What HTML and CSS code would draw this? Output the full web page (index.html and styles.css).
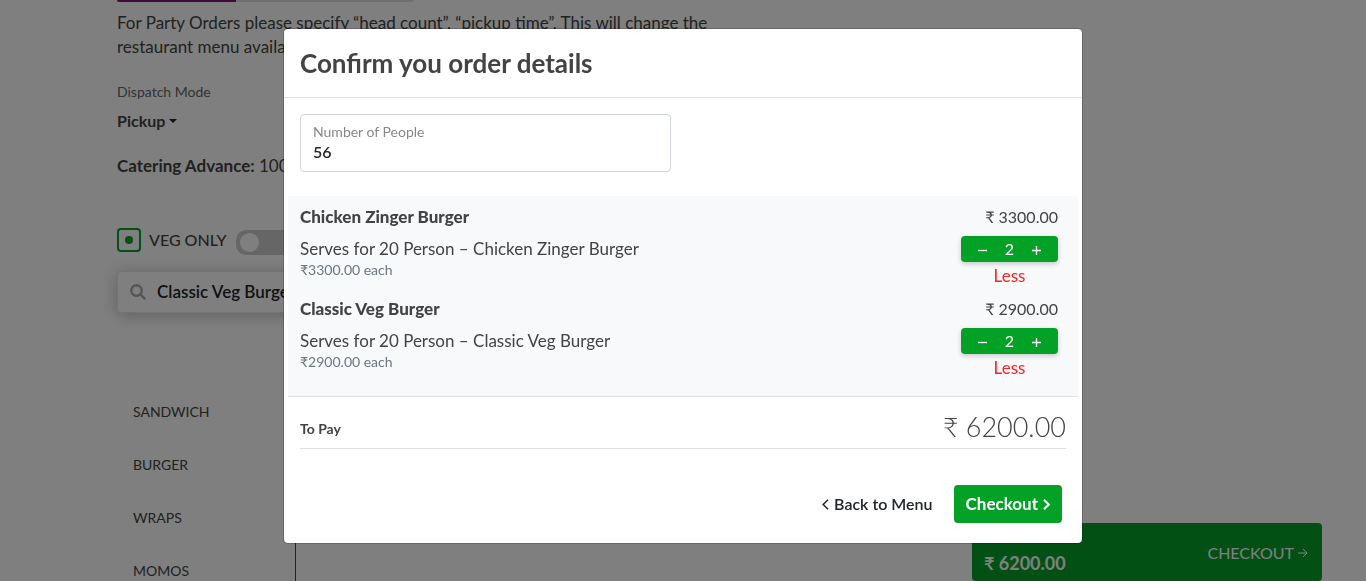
FILE: index.html
```html
<!DOCTYPE html>
<html lang="en">
<head>
<meta charset="utf-8">
<meta name="viewport" content="width=device-width, initial-scale=1">
<title>Confirm you order details</title>
<link rel="stylesheet" href="styles.css">
</head>
<body>
<main class="page">
  <div class="progress"><div class="progress-fill" style="width:40%"></div></div>
  <p class="notice">For Party Orders please specify “head count”, “pickup time”. This will change the restaurant menu available.</p>
  <label class="dispatch-label" for="dispatch">Dispatch Mode</label>
  <div class="dispatch">
    <select id="dispatch" class="dispatch-select"><option>Pickup</option></select>
    <svg class="caret" viewBox="0 0 8 4" aria-hidden="true"><path d="M0 0h8L4 4z"/></svg>
  </div>
  <p class="advance"><strong>Catering Advance:</strong> 100%</p>
  <div class="veg">
    <span class="veg-mark"></span>
    <label for="veg">VEG ONLY</label>
    <input class="toggle" type="checkbox" id="veg">
  </div>
  <div class="search">
    <svg class="search-icon" viewBox="0 0 16 16" aria-hidden="true"><circle cx="6.5" cy="6.5" r="5.2"/><path d="M10.5 10.5L14.6 14.6"/></svg>
    <input class="search-input" type="text" value="Classic Veg Burger" aria-label="Search menu">
  </div>
  <nav class="categories">
    <a href="#sandwich">SANDWICH</a>
    <a href="#burger">BURGER</a>
    <a href="#wraps">WRAPS</a>
    <a href="#momos">MOMOS</a>
  </nav>
</main>
<aside class="cart-bar">
  <strong class="cart-total">₹ 6200.00</strong>
  <button class="cart-checkout" type="button">CHECKOUT
    <svg class="arrow" viewBox="0 0 10 10" aria-hidden="true"><path d="M0 5h9M5 1l4 4-4 4"/></svg>
  </button>
</aside>
<div class="backdrop">
  <section class="modal" role="dialog" aria-modal="true" aria-labelledby="modal-title">
    <header class="modal-header"><h1 id="modal-title">Confirm you order details</h1></header>
    <div class="fields">
      <div class="field">
        <label for="people">Number of People</label>
        <input id="people" type="text" value="56">
      </div>
    </div>
    <div class="items">
      <article class="item">
        <div class="item-info">
          <h2>Chicken Zinger Burger</h2>
          <p class="serves">Serves for 20 Person – Chicken Zinger Burger</p>
          <p class="each">₹3300.00 each</p>
        </div>
        <div class="item-side">
          <span class="price">₹ 3300.00</span>
          <div class="stepper">
            <button type="button" aria-label="Decrease"><svg viewBox="0 0 9 9"><path d="M0 4.5h9"/></svg></button>
            <span>2</span>
            <button type="button" aria-label="Increase"><svg viewBox="0 0 9 9"><path d="M0 4.5h9M4.5 0v9"/></svg></button>
          </div>
          <span class="less">Less</span>
        </div>
      </article>
      <article class="item">
        <div class="item-info">
          <h2>Classic Veg Burger</h2>
          <p class="serves">Serves for 20 Person – Classic Veg Burger</p>
          <p class="each">₹2900.00 each</p>
        </div>
        <div class="item-side">
          <span class="price">₹ 2900.00</span>
          <div class="stepper">
            <button type="button" aria-label="Decrease"><svg viewBox="0 0 9 9"><path d="M0 4.5h9"/></svg></button>
            <span>2</span>
            <button type="button" aria-label="Increase"><svg viewBox="0 0 9 9"><path d="M0 4.5h9M4.5 0v9"/></svg></button>
          </div>
          <span class="less">Less</span>
        </div>
      </article>
    </div>
    <div class="total">
      <span class="total-label">To Pay</span>
      <span class="total-value">₹ 6200.00</span>
    </div>
    <footer class="actions">
      <button class="back" type="button"><svg class="chevron" viewBox="0 0 7 11" aria-hidden="true"><path d="M6 0.8L1.2 5.5L6 10.2"/></svg>Back to Menu</button>
      <button class="checkout" type="button">Checkout<svg class="chevron bold" viewBox="0 0 7 11" aria-hidden="true"><path d="M1 0.8L5.8 5.5L1 10.2"/></svg></button>
    </footer>
  </section>
</div>
</body>
</html>
```
FILE: styles.css
```css
* { box-sizing: border-box; }
body {
  margin: 0;
  height: 100vh;
  overflow: hidden;
  background: #fff;
  color: #434343;
  font: 17px/24px Lato, "Noto Sans", sans-serif;
}
h1, h2, p { margin: 0; }
button, input, select { font: inherit; color: inherit; }
button { border: 0; background: none; padding: 0; cursor: pointer; }
svg { fill: none; stroke: currentColor; }

.page { padding: 0 117px; }
.progress {
  width: 297px;
  height: 2px;
  background: #e0e0e0;
  border-radius: 0 0 4px 4px;
  overflow: hidden;
}
.progress-fill { height: 100%; background: #7b1b6b; }
.notice { max-width: 620px; margin-top: 9px; }
.dispatch-label { display: block; margin-top: 21px; font-size: 14px; color: #666; }
.dispatch { display: flex; align-items: center; gap: 3px; margin-top: 5px; }
.dispatch-select {
  appearance: none;
  border: 0;
  padding: 0;
  background: none;
  font-size: 16px;
  font-weight: 700;
}
.caret { width: 8px; height: 4px; fill: #212529; stroke: none; }
.advance { margin-top: 21px; }
.veg { display: flex; align-items: center; gap: 8px; margin-top: 49px; height: 26px; font-size: 16px; font-weight: 500; }
.veg-mark {
  display: grid;
  place-items: center;
  width: 24px;
  height: 24px;
  border: 2px solid #04a127;
  border-radius: 4px;
}
.veg-mark::before { content: ""; width: 8px; height: 8px; border-radius: 50%; background: #04a127; }
.toggle {
  appearance: none;
  width: 60px;
  height: 25px;
  margin: 4px 0 0 1px;
  padding: 3px 4px;
  border-radius: 10px;
  background: #ccc;
}
.toggle::before { content: ""; display: block; width: 19px; height: 19px; border-radius: 50%; background: #fff; }
.search {
  display: flex;
  align-items: center;
  gap: 11px;
  width: 400px;
  height: 42px;
  margin-top: 18px;
  padding: 0 12px;
  border: 1px solid #e6e6e6;
  border-radius: 4px;
  background: #fff;
  box-shadow: 0 2px 16px rgba(0, 0, 0, 0.25);
}
.search-icon { width: 16px; height: 16px; stroke: #aaa; stroke-width: 2.4; stroke-linecap: round; }
.search-input { flex: 1; min-width: 0; border: 0; padding: 0; background: none; color: #212529; font-weight: 600; }
.categories {
  display: grid;
  width: 179px;
  margin-top: 72px;
  border-right: 1px solid #7b1b6b;
  padding-left: 16px;
}
.categories a { line-height: 53px; font-size: 14px; color: inherit; text-decoration: none; }

.cart-bar {
  position: fixed;
  right: 44px;
  bottom: 0;
  display: flex;
  justify-content: space-between;
  width: 350px;
  height: 58px;
  padding: 0 14px 6px 12px;
  border-radius: 4px;
  background: #04a127;
  color: #fff;
}
.cart-total { align-self: flex-end; font-size: 18px; }
.cart-checkout { display: flex; align-items: center; gap: 4px; padding-top: 8px; font-size: 16px; color: #fff; }
.arrow { width: 10px; height: 10px; }

.backdrop {
  position: fixed;
  inset: 0;
  padding: 28px 16px;
  background: rgba(0, 0, 0, 0.5);
}
.modal {
  max-width: 800px;
  margin: 0 auto;
  border: 1px solid rgba(0, 0, 0, 0.2);
  border-radius: 5px;
  background: #fff;
  background-clip: padding-box;
}
.modal-header { padding: 16px; border-bottom: 1px solid #dee2e6; }
.modal-header h1 { font-size: 26px; line-height: 36px; font-weight: 700; }
.fields { display: grid; grid-template-columns: 1fr 1fr; gap: 24px; padding: 16px 16px 24px; }
.field { display: grid; padding: 7px 12px 10px; border: 1px solid #ced4da; border-radius: 4px; }
.field label { font-size: 14px; line-height: 20px; color: #888; }
.field input { width: 100%; height: 19px; border: 0; padding: 0; color: #212529; font-size: 16px; line-height: 19px; font-weight: 600; }
.items { margin: 0 4px; padding: 8px 20px 8px 12px; background: #f8f9fb; border-bottom: 1px solid #dee2e6; }
.item { display: flex; justify-content: space-between; height: 92px; }
.item h2 { font-size: 17px; line-height: 26px; font-weight: 900; }
.serves { margin-top: 6px; line-height: 26px; }
.each { font-size: 14px; line-height: 16px; color: #6c757d; }
.item-side { display: grid; grid-template-rows: 28px 26px 26px; row-gap: 2px; width: 97px; align-content: start; }
.price { text-align: right; font-size: 16px; line-height: 26px; }
.stepper {
  display: flex;
  align-items: center;
  justify-content: space-between;
  margin: 2px 0 -2px;
  padding: 0 17px;
  border-radius: 4px;
  background: #04a127;
  color: #fff;
  font-size: 16px;
  box-shadow: 0 2px 5px rgba(0, 0, 0, 0.2);
}
.stepper button { display: grid; padding-top: 2px; }
.stepper svg { width: 9px; height: 9px; stroke-width: 1.3; }
.less { text-align: center; line-height: 28px; color: #f22; }
.total {
  display: flex;
  align-items: center;
  justify-content: space-between;
  margin: 0 16px;
  padding: 12px 0 3px;
  border-bottom: 1px solid #dee2e6;
}
.total-label { padding-top: 4px; font-size: 14px; font-weight: 700; }
.total-value { font-size: 27px; line-height: 36px; font-weight: 300; }
.actions { display: flex; justify-content: flex-end; align-items: center; gap: 21px; padding: 36px 20px 20px; }
.actions button { display: flex; align-items: center; gap: 5px; height: 38px; font-weight: 700; }
.actions .back { font-size: 16px; font-weight: 600; color: #212529; }
.chevron { width: 7px; height: 11px; stroke-width: 1.5; }
.bold { stroke-width: 2.2; }
.actions .checkout { padding: 0 12px; border-radius: 4px; background: #04a127; color: #fff; }
```
